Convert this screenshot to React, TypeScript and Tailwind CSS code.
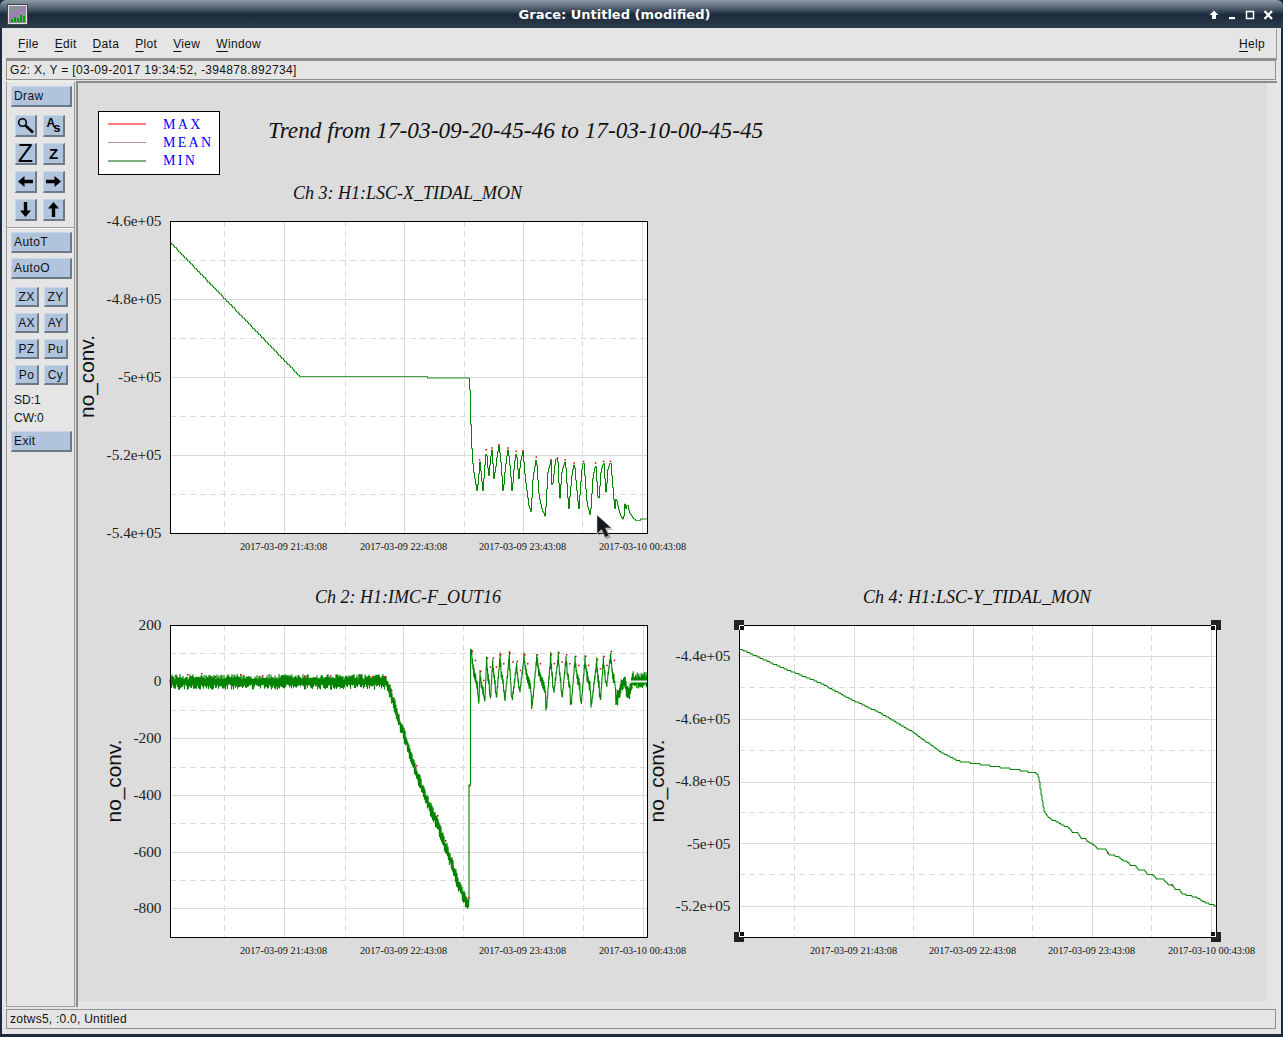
import React from "react";

let seed = 12345;
const rnd = () => {
  seed = (seed * 1664525 + 1013904223) % 4294967296;
  return seed / 4294967296;
};

type P = [number, number];
const lerpAt = (pts: P[], x: number) => {
  for (let i = 1; i < pts.length; i++) {
    if (x <= pts[i][0]) {
      const [x0, y0] = pts[i - 1];
      const [x1, y1] = pts[i];
      if (x1 === x0) return y1;
      return y0 + ((y1 - y0) * (x - x0)) / (x1 - x0);
    }
  }
  return pts[pts.length - 1][1];
};
const stairs = (pts: P[], stepX = 1.0, stepY = 1.5) => {
  let d = "";
  let lastY = 0;
  const x0 = pts[0][0];
  const x1 = pts[pts.length - 1][0];
  for (let x = x0; x <= x1; x += stepX) {
    const y = Math.round(lerpAt(pts, x) / stepY) * stepY;
    if (!d) d = `M${x} ${y}`;
    else d += `H${x.toFixed(1)}V${y}`;
    lastY = y;
  }
  return d + `H${x1}V${lastY}`;
};
const z1 = ([x, y]: P): P => [460 + x / 3, 370 + y / 3];
const p1tail: P[] = ([
  [28, 22],[29, 100],[32, 175],[35, 245],[38, 290],[42, 315],[46, 340],[50, 365],[55, 320],[58, 270],[60, 290],[63, 320],[68, 365],[72, 300],[78, 240],[82, 290],[85, 320],[90, 270],[95, 235],[100, 330],[105, 300],[110, 260],[116, 225],[122, 280],[128, 370],[135, 290],[143, 235],[150, 300],[155, 370],[162, 280],[168, 245],[175, 330],[180, 280],[188, 243],[195, 330],[205, 405],[212, 428],[218, 320],[228, 262],[235, 370],[245, 420],[255, 440],[262, 310],[272, 270],[275, 360],[285, 270],[292, 265],[298, 390],[305, 300],[315, 270],[325, 420],[335, 310],[342, 280],[355, 420],[365, 290],[370, 275],[380, 400],[390, 440],[398, 320],[406, 280],[414, 405],[422, 300],[430, 275],[437, 375],[442, 300],[451, 275],[457, 345],[463, 420],[467, 385],[478, 430],[490, 450],[492, 395],[497, 420],[501, 400],[505, 420],[510, 430],[520, 448],[535, 452],[545, 447],[562, 447],
] as P[]).map(z1);
const p1: P[] = [[170.5, 243], [300, 377], ...p1tail];
const p1Red = p1tail.filter((p, i) => i > 6 && i < p1tail.length - 8 && p[1] < 465 && p[1] <= p1tail[i - 1][1] && p[1] <= p1tail[i + 1][1]);

const z2 = ([x, y]: P): P => [370 + x / 3, 640 + y / 3];
const peaks: [number, number, number, number][] = [
  [305, 35, 325, 210],[330, 95, 343, 200],[350, 55, 360, 190],[368, 55, 378, 185],[390, 45, 403, 195],[418, 40, 425, 190],[440, 65, 448, 170],[462, 45, 485, 210],[500, 45, 528, 215],[542, 45, 550, 170],[565, 40, 575, 185],[588, 45, 602, 205],[615, 50, 632, 205],[645, 50, 663, 205],[680, 60, 690, 195],[700, 50, 708, 150],[722, 35, 738, 205],
];
let d2 = "M170 681";
const band = (pts: P[], amp: number, step = 0.5) => {
  const a = pts[0][0];
  const b = pts[pts.length - 1][0];
  let up = true;
  for (let x = a; x <= b; x += step) {
    const y = lerpAt(pts, x) + (up ? -1 : 1) * amp * (0.3 + 0.7 * rnd());
    up = !up;
    d2 += `L${x.toFixed(1)} ${y.toFixed(1)}`;
  }
};
band([[170, 682], [386, 682]], 8);
band([[386, 682], [392, 697], [398, 718], [406, 740], [418, 777], [425, 797], [437, 823], [448, 853], [458, 883], [465, 900], [469, 904]], 8);
d2 += "L469 785L470.5 785L470.5 652";
let prevX = 471;
let prevY = 652;
peaks.forEach(([px, py, tx, ty]) => {
  const [x1, y1] = z2([px, py]);
  const [x2, y2] = z2([tx, ty]);
  band([[prevX, prevY], [x1, y1 + 3]], 3.5, 0.4);
  const knee = x1 + (x2 - x1) * 0.3;
  band([[x1, y1 + 3], [knee, y1 + (y2 - y1) * 0.35], [x2 - 0.8, y1 + (y2 - y1) * 0.6], [x2, y2 - 3]], 6, 0.4);
  prevX = x2 + 0.4;
  prevY = y2 - 3;
});
band([[prevX, 700], [624, 680], [628, 695], [633, 680], [647, 681]], 9, 0.4);
const p2Red: P[] = peaks.flatMap(([px, py]) => {
  const [x, y] = z2([px, py]);
  return [[x, y - 1], [x + 3, y + 8]] as P[];
});
[[175, 675],[187, 674],[201, 673],[215, 676],[240, 674],[262, 675],[304, 676],[330, 675],[372, 676],[384, 676],[391, 690],[416, 765],[437, 815],[445, 840],[468, 897],[469, 785]].forEach((p) => p2Red.push(p as P));

const z3 = ([x, y]: P): P => [1000 + x / 3, 760 + y / 3];
const p3: P[] = [
  [740, 649],[780, 667],[820, 683],[850, 699],[880, 713],[914, 733],[940, 752],[958, 761],
  ...([
    [0, 22],[60, 31],[112, 41],[118, 70],[122, 100],[126, 125],[131, 150],[135, 160],[150, 178],[170, 185],[180, 192],[205, 203],[215, 217],[230, 218],[240, 233],[255, 237],[265, 247],[280, 253],[290, 267],[315, 266],[325, 283],[355, 290],[365, 300],[380, 305],[390, 316],[405, 318],[415, 330],[430, 328],[440, 343],[458, 345],[470, 358],[490, 358],[503, 373],[515, 375],[525, 387],[537, 388],[547, 402],[565, 407],[585, 411],[610, 425],[635, 435],[650, 437],
  ] as P[]).map(z3),
];

const GREEN = "#008400";
const GRID = "#dadada";
type GraphProps = {
  x0: number; y0: number; x1: number; y1: number;
  vSolid: number[]; vDash: number[]; hSolid: number[]; hDash: number[];
  ticks: number[]; yLabels: [string, number][]; yRight: number;
  title: string; titleX: number; titleY: number;
  ylX: number; ylY: number;
  children: React.ReactNode;
};
const XT = ["2017-03-09 21:43:08", "2017-03-09 22:43:08", "2017-03-09 23:43:08", "2017-03-10 00:43:08"];
const serif = "font-['Liberation_Serif',serif]";
function Graph(g: GraphProps) {
  return (
    <g>
      <rect x={g.x0} y={g.y0} width={g.x1 - g.x0} height={g.y1 - g.y0} fill="#fff" />
      {g.vSolid.map((x) => <line key={x} x1={x + 0.5} x2={x + 0.5} y1={g.y0} y2={g.y1} stroke={GRID} />)}
      {g.vDash.map((x) => <line key={x} x1={x + 0.5} x2={x + 0.5} y1={g.y0} y2={g.y1} stroke={GRID} strokeDasharray="6 4" />)}
      {g.hSolid.map((y) => <line key={y} y1={y + 0.5} y2={y + 0.5} x1={g.x0} x2={g.x1} stroke={GRID} />)}
      {g.hDash.map((y) => <line key={y} y1={y + 0.5} y2={y + 0.5} x1={g.x0} x2={g.x1} stroke={GRID} strokeDasharray="6 4" />)}
      {g.children}
      <rect x={g.x0 + 0.5} y={g.y0 + 0.5} width={g.x1 - g.x0} height={g.y1 - g.y0} fill="none" stroke="#000" />
      {g.ticks.map((x, i) => (
        <text key={x} x={x} y={g.y1 + 16.5} textAnchor="middle" className={`${serif} text-[10.3px] fill-[#111]`}>{XT[i]}</text>
      ))}
      {g.yLabels.map(([t, y]) => (
        <text key={t} x={g.yRight} y={y + 5} textAnchor="end" className={`${serif} text-[15.3px] fill-[#222]`}>{t}</text>
      ))}
      <text x={g.titleX} y={g.titleY} className={`${serif} italic text-[18px] fill-[#111]`}>{g.title}</text>
      <text transform={`translate(${g.ylX} ${g.ylY}) rotate(-90)`} textAnchor="middle" className="font-['Liberation_Sans',sans-serif] text-[20.8px] fill-[#111]">no_conv.</text>
    </g>
  );
}

function Handle({ x, y }: { x: number; y: number }) {
  const sx = x < 1000 ? 1 : -1;
  const sy = y < 700 ? 1 : -1;
  return (
    <g>
      <rect x={x - 5} y={y - 5} width={10} height={10} fill="#222" />
      <rect x={sx > 0 ? x : x - 5} y={sy > 0 ? y : y - 5} width={5} height={5} fill="#fff" />
      <rect x={sx > 0 ? x + 1 : x - 5} y={sy > 0 ? y + 1 : y - 5} width={4} height={4} fill="#111" />
    </g>
  );
}

function Canvas() {
  return (
    <svg viewBox="78 83 1188 918" width={1188} height={918} className="block">
      <text x={268} y={138} className={`${serif} italic text-[23.3px] fill-[#111]`}>Trend from 17-03-09-20-45-46 to 17-03-10-00-45-45</text>

      <rect x={98.5} y={111.5} width={121} height={63} fill="#fff" stroke="#000" />
      <line x1={108} x2={146} y1={124} y2={124} stroke="#ff0000" strokeWidth={1.2} />
      <line x1={108} x2={146} y1={142.5} y2={142.5} stroke="#bc8f8f" />
      <line x1={108} x2={146} y1={161} y2={161} stroke="#006400" strokeWidth={1.2} />
      <text x={163} y={129} className={`${serif} text-[14px] tracking-[2.3px] fill-[#0000ff]`}>MAX</text>
      <text x={163} y={147} className={`${serif} text-[14px] tracking-[2.3px] fill-[#0000ff]`}>MEAN</text>
      <text x={163} y={165} className={`${serif} text-[14px] tracking-[2.3px] fill-[#0000ff]`}>MIN</text>

      <Graph
        x0={170} y0={221} x1={647} y1={533}
        vSolid={[284, 404, 523, 642]} vDash={[224, 345, 464, 582]}
        hSolid={[299, 377, 455]} hDash={[260, 338, 416, 494]}
        ticks={[283.5, 403.5, 522.5, 642.5]}
        yLabels={[["-4.6e+05", 221], ["-4.8e+05", 299], ["-5e+05", 377], ["-5.2e+05", 455], ["-5.4e+05", 533]]}
        yRight={161.5}
        title="Ch 3: H1:LSC-X_TIDAL_MON" titleX={293} titleY={199}
        ylX={94} ylY={376.5}
      >
        <path d={stairs(p1)} fill="none" stroke={GREEN} strokeWidth={1} />
        {p1Red.map(([x, y], i) => <rect key={i} x={x - 0.5} y={y - 1} width={1.5} height={1.5} fill="#e00000" />)}
      </Graph>

      <Graph
        x0={170} y0={625} x1={647} y1={937}
        vSolid={[284, 403, 523, 643]} vDash={[224, 345, 463, 583]}
        hSolid={[682, 738, 795, 852, 908]} hDash={[653, 710, 767, 823, 880]}
        ticks={[283.5, 403.5, 522.5, 642.5]}
        yLabels={[["200", 625], ["0", 681], ["-200", 738], ["-400", 795], ["-600", 852], ["-800", 908]]}
        yRight={161.5}
        title="Ch 2: H1:IMC-F_OUT16" titleX={315} titleY={603}
        ylX={121} ylY={781}
      >
        <path d={d2} fill="none" stroke={GREEN} strokeWidth={1.1} />
        <rect x={630} y={680.5} width={17} height={2} fill="#f4f4f4" />
        {p2Red.map(([x, y], i) => <rect key={i} x={x} y={y} width={1.5} height={1.5} fill="#e00000" />)}
      </Graph>

      <Graph
        x0={739} y0={625} x1={1216} y1={937}
        vSolid={[854, 973, 1092, 1211]} vDash={[794, 913, 1032, 1151]}
        hSolid={[656, 719, 782, 843, 906]} hDash={[687, 750, 812, 874]}
        ticks={[853.5, 972.5, 1091.5, 1211.5]}
        yLabels={[["-4.4e+05", 656], ["-4.6e+05", 719], ["-4.8e+05", 781], ["-5e+05", 844], ["-5.2e+05", 906]]}
        yRight={730.5}
        title="Ch 4: H1:LSC-Y_TIDAL_MON" titleX={863} titleY={603}
        ylX={664} ylY={781}
      >
        <path d={stairs(p3)} fill="none" stroke={GREEN} strokeWidth={1} />
        <rect x={1107} y={852} width={1.5} height={1.5} fill="#c00000" />
        <rect x={1171} y={884} width={1.5} height={1.5} fill="#c00000" />
      </Graph>

      <Handle x={739} y={625} />
      <Handle x={1216} y={625} />
      <Handle x={739} y={937} />
      <Handle x={1216} y={937} />

      <path d="M598.5 517L598.5 536L603 531.5L606.5 539.5L611 537.5L607.5 530L613 530Z" fill="#000" fillOpacity={0.25} />
      <path d="M597 515L597 534L601.5 529.5L605 537.5L609 535.5L605.5 528L611.5 528Z" fill="#15181c" stroke="#c8c8c8" strokeWidth={0.6} />
    </svg>
  );
}

const sans = "font-['Liberation_Sans',sans-serif]";
const bevel = "bg-[#b0c4de] border-t border-l border-b-2 border-r-2 border-t-[#c9d6e8] border-l-[#c9d6e8] border-b-[#6c7a88] border-r-[#6c7a88]";

function WideBtn({ label, className = "" }: { label: string; className?: string }) {
  return (
    <div className={`${bevel} w-[61px] h-[21px] flex items-center pl-[2px] text-[12px] tracking-[0.4px] leading-none text-[#111] ${sans} ${className}`}>{label}</div>
  );
}
function IconBtn({ children }: { children: React.ReactNode }) {
  return <div className={`${bevel} w-[22px] h-[22px] flex items-center justify-center text-[#000] ${sans}`}>{children}</div>;
}
function TxtBtn({ label }: { label: string }) {
  return <div className={`${bevel} w-[24px] h-[20px] flex items-center justify-center text-[12px] tracking-[0.3px] leading-none text-[#111] ${sans}`}>{label}</div>;
}
const Arrow = ({ rot }: { rot: number }) => (
  <svg width="17" height="17" viewBox="0 0 17 17" style={{ transform: `rotate(${rot}deg)` }}>
    <path d="M1 8.5L7.5 3V6.8H16V10.2H7.5V14Z" fill="#000" />
  </svg>
);

function Toolbar() {
  return (
    <div className="w-[69px] border border-[#9a9a9a] border-t-[#f2f2f2] border-l-[#9a9a9a] flex flex-col items-start mr-[1px] pt-[4px] pl-[4px]">
      <WideBtn label="Draw" />
      <div className="grid grid-cols-[22px_22px] gap-[6px] ml-[4px] mt-[8px]">
        <IconBtn>
          <svg width="19" height="19" viewBox="0 0 19 19" fill="none" stroke="#000">
            <circle cx="6.5" cy="6.5" r="3.8" strokeWidth="1.6" />
            <path d="M9.5 9.5L17 16.5" strokeWidth="2.6" />
          </svg>
        </IconBtn>
        <IconBtn>
          <span className="font-bold text-[12px] leading-none relative -top-[3px] left-[1px]">A</span>
          <span className="font-bold text-[13px] leading-none relative top-[2px] -left-[1px]">s</span>
        </IconBtn>
        <IconBtn><span className="text-[25px] leading-none font-normal">Z</span></IconBtn>
        <IconBtn><span className="text-[15px] leading-none font-bold">Z</span></IconBtn>
        <IconBtn><Arrow rot={0} /></IconBtn>
        <IconBtn><Arrow rot={180} /></IconBtn>
        <IconBtn><Arrow rot={-90} /></IconBtn>
        <IconBtn><Arrow rot={90} /></IconBtn>
      </div>
      <div className="w-[67px] -ml-[4px] h-[2px] mt-[6px] bg-[#9a9a9a] border-b border-b-white" />
      <WideBtn label="AutoT" className="mt-[3px]" />
      <WideBtn label="AutoO" className="mt-[5px]" />
      <div className="grid grid-cols-[24px_24px] gap-x-[5px] gap-y-[6px] ml-[4px] mt-[8px]">
        {["ZX", "ZY", "AX", "AY", "PZ", "Pu", "Po", "Cy"].map((t) => <TxtBtn key={t} label={t} />)}
      </div>
      <div className={`${sans} text-[12px] leading-[18px] text-[#111] ml-[3px] mt-[6px]`}>
        <div>SD:1</div>
        <div>CW:0</div>
      </div>
      <WideBtn label="Exit" className="mt-[4px]" />
    </div>
  );
}

function Menu({ t }: { t: string }) {
  return <span><span className="underline underline-offset-[3px]">{t[0]}</span>{t.slice(1)}</span>;
}

export default function App() {
  return (
    <div className="w-[1283px] h-[1037px] bg-[#1c2a39] pl-[2px] pr-[2px] pb-[3px] flex flex-col overflow-hidden">
      <div className="-mx-[2px] h-[28px] shrink-0 relative rounded-t-[6px] bg-[linear-gradient(to_bottom,#8e9ba7_0%,#5b6a79_25%,#1c2b3b_52%,#243443_80%,#2f3e4d_100%)] flex items-center justify-center pr-[54px] pt-[2px]">
        <div className="absolute left-[7px] top-[4px] w-[21px] h-[21px] bg-[#e0e0e0] border border-[#444] flex items-center justify-center">
          <svg width="17" height="17" viewBox="0 0 17 17">
            <rect width="17" height="17" fill="#8f8f9f" />
            <path d="M1 12L6 9L10 6L16 1" stroke="#c060e0" strokeWidth="1.5" fill="none" />
            <path d="M3 16V13M6 16V11M9 16V12M12 16V9M15 16V10" stroke="#00a000" strokeWidth="2" />
          </svg>
        </div>
        <span className="font-['DejaVu_Sans',sans-serif] font-bold text-[13px] text-white">Grace: Untitled (modified)</span>
        <div className="absolute right-0 top-0 h-full w-[80px]">
          <svg width="80" height="28" viewBox="1203 0 80 28" className="block">
            <path d="M1214 10.5L1218.5 15H1216V19H1212V15H1209.5Z" fill="#fff" />
            <rect x="1229" y="17" width="6" height="2.2" fill="#fff" />
            <rect x="1246.5" y="11.5" width="7" height="7" fill="none" stroke="#fff" strokeWidth="1.5" />
            <path d="M1264.5 11L1272 19M1272 11L1264.5 19" stroke="#fff" strokeWidth="2.2" />
          </svg>
        </div>
      </div>
      <div className="flex-1 bg-[#e5e5e5] px-[4px] pt-[1px] flex flex-col min-h-0">
        <div className={`h-[31px] shrink-0 border-b-2 border-r border-b-[#8f8f8f] border-r-[#9a9a9a] flex items-center justify-between pl-[12px] pr-[11px] text-[12px] tracking-[0.32px] text-[#111] ${sans}`}>
          <div className="flex gap-[16px]">
            {["File", "Edit", "Data", "Plot", "View", "Window"].map((t) => <Menu key={t} t={t} />)}
          </div>
          <Menu t="Help" />
        </div>
        <div className={`h-[20px] shrink-0 border border-[#8f8f8f] mr-[1px] flex items-center pl-[3px] text-[12px] tracking-[0.33px] text-[#111] ${sans}`}>
          G2: X, Y = [03-09-2017 19:34:52, -394878.892734]
        </div>
        <div className="flex-1 flex min-h-0 mt-[1px]">
          <Toolbar />
          <div className="border-l-2 border-t-2 border-[#8a8a8a] pr-[10px] flex-1">
            <div className="bg-[#dcdcdc]"><Canvas /></div>
          </div>
        </div>
        <div className={`h-[20px] mt-[2px] mb-[5px] shrink-0 border border-[#8f8f8f] mr-[1px] flex items-center pl-[3px] text-[12px] tracking-[0.25px] text-[#111] ${sans}`}>
          zotws5, :0.0, Untitled
        </div>
      </div>
    </div>
  );
}
